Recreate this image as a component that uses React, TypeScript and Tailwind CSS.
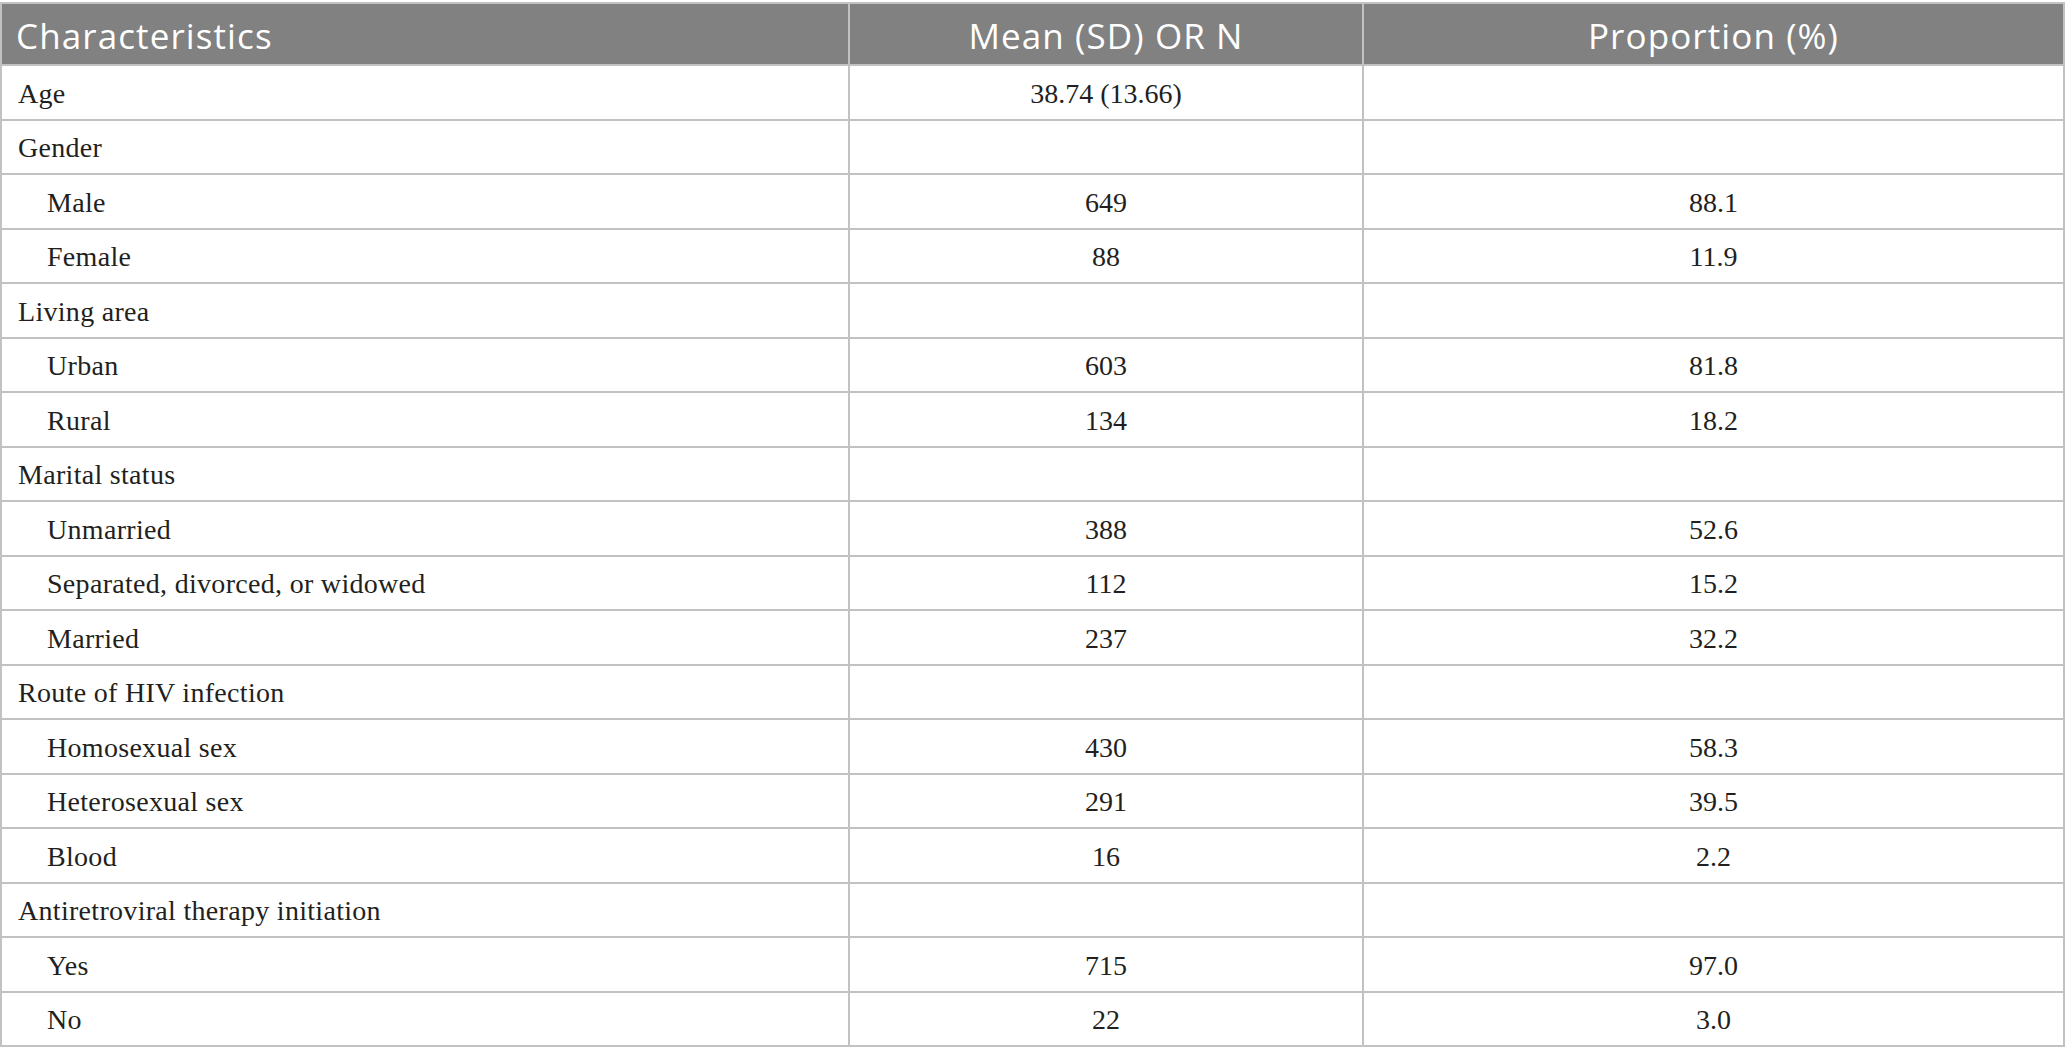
import React from "react";

type Row = { label: string; sub?: boolean; a: string; b: string };

const rows: Row[] = [
  { label: "Age", a: "38.74 (13.66)", b: "" },
  { label: "Gender", a: "", b: "" },
  { label: "Male", sub: true, a: "649", b: "88.1" },
  { label: "Female", sub: true, a: "88", b: "11.9" },
  { label: "Living area", a: "", b: "" },
  { label: "Urban", sub: true, a: "603", b: "81.8" },
  { label: "Rural", sub: true, a: "134", b: "18.2" },
  { label: "Marital status", a: "", b: "" },
  { label: "Unmarried", sub: true, a: "388", b: "52.6" },
  { label: "Separated, divorced, or widowed", sub: true, a: "112", b: "15.2" },
  { label: "Married", sub: true, a: "237", b: "32.2" },
  { label: "Route of HIV infection", a: "", b: "" },
  { label: "Homosexual sex", sub: true, a: "430", b: "58.3" },
  { label: "Heterosexual sex", sub: true, a: "291", b: "39.5" },
  { label: "Blood", sub: true, a: "16", b: "2.2" },
  { label: "Antiretroviral therapy initiation", a: "", b: "" },
  { label: "Yes", sub: true, a: "715", b: "97.0" },
  { label: "No", sub: true, a: "22", b: "3.0" },
];

export default function App() {
  return (
    <div className="w-[2067px] h-[1063px] bg-white pt-[2px]">
      <div className="w-[2065px] grid grid-cols-[846px_512px_699px] auto-rows-[52.5px] gap-[2px] p-[2px] bg-[#c2c2c2] [grid-template-rows:60px]">
        <div className="bg-[#808180] text-white flex items-center pl-[14px] pt-[2px] text-[35px] font-normal tracking-[1.1px] leading-none [font-family:'Open_Sans',sans-serif]">
          Characteristics
        </div>
        <div className="bg-[#808180] text-white flex items-center justify-center pt-[2px] text-[35px] font-normal tracking-[1.1px] leading-none [font-family:'Open_Sans',sans-serif]">
          Mean (SD) OR N
        </div>
        <div className="bg-[#808180] text-white flex items-center justify-center pt-[2px] text-[35px] font-normal tracking-[1.1px] leading-none [font-family:'Open_Sans',sans-serif]">
          Proportion (%)
        </div>
        {rows.map((r, i) => (
          <React.Fragment key={i}>
            <div
              className={`bg-white flex items-center pt-[3px] text-[28px] tracking-[0.3px] leading-none text-[#231f20] [font-family:'Liberation_Serif',serif] ${
                r.sub ? "pl-[45px]" : "pl-[16px]"
              }`}
            >
              {r.label}
            </div>
            <div className="bg-white flex items-center justify-center pt-[3px] text-[28px] leading-none text-[#231f20] [font-family:'Liberation_Serif',serif]">
              {r.a}
            </div>
            <div className="bg-white flex items-center justify-center pt-[3px] text-[28px] leading-none text-[#231f20] [font-family:'Liberation_Serif',serif]">
              {r.b}
            </div>
          </React.Fragment>
        ))}
      </div>
    </div>
  );
}
